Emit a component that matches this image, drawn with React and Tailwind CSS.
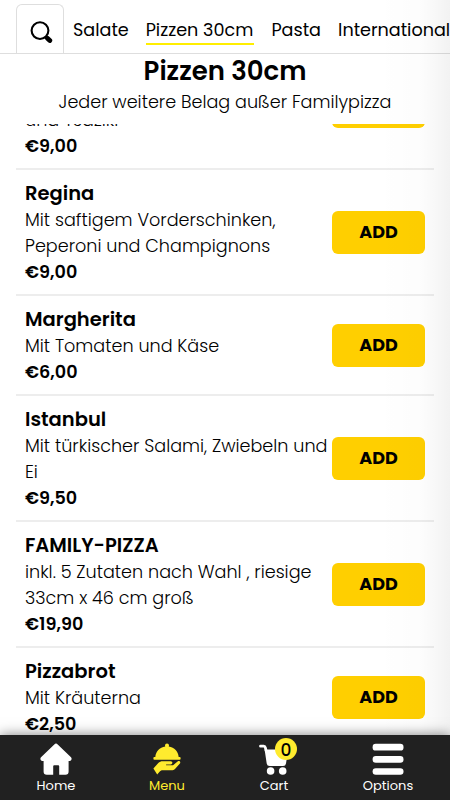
import { useState } from "react";

const CATEGORIES = [
  { name: "Salate", width: "w-[55px]" },
  { name: "Pizzen 30cm", width: "w-[108px]" },
  { name: "Pasta", width: "w-[49px]" },
  { name: "International", width: "w-[116px]" },
];

const PIZZAS = [
  { lines: ["und Tsaziki"], price: "€9,00" },
  {
    name: "Regina",
    lines: ["Mit saftigem Vorderschinken,", "Peperoni und Champignons"],
    price: "€9,00",
  },
  { name: "Margherita", lines: ["Mit Tomaten und Käse"], price: "€6,00" },
  {
    name: "Istanbul",
    lines: ["Mit türkischer Salami, Zwiebeln und", "Ei"],
    price: "€9,50",
  },
  {
    name: "FAMILY-PIZZA",
    lines: ["inkl. 5 Zutaten nach Wahl , riesige", "33cm x 46 cm groß"],
    price: "€19,90",
  },
  { name: "Pizzabrot", lines: ["Mit Kräuterna"], price: "€2,50" },
];

const SearchIcon = () => (
  <svg viewBox="0 0 24 24" className="h-6 w-6" fill="none" stroke="currentColor">
    <circle cx="11" cy="10.600" r="8.400" strokeWidth="2.100" />
    <path d="M16.500 16.500 18 18" strokeWidth="2" />
    <path d="M18.400 18.200 20.800 20.500" strokeWidth="4.800" strokeLinecap="round" />
  </svg>
);

const HomeIcon = () => (
  <svg viewBox="0 0 32 32" className="h-8 w-8" fill="currentColor">
    <path d="M14.3 1.400a2.400 2.400 0 0 1 3.400 0L31 14.300c1.200 1.200.6 3.600-1.400 3.600H28.600V28.500a3.200 3.200 0 0 1-3.200 3.200H19.200V23.300a1 1 0 0 0-1-1H14.200a1 1 0 0 0-1 1V31.700H6.800A3.200 3.200 0 0 1 3.600 28.500V17.900H2.400C.4 17.900-.2 15.500 1 14.300Z" />
  </svg>
);

const MenuIcon = () => (
  <svg viewBox="0 0 28 32" className="h-8 w-7" fill="currentColor">
    <path d="M12 2.600a2 2 0 1 1 4 0c0 .4-.1.700-.3 1C21.500 4.300 25.300 8.700 25.700 14.200H2.300C2.700 8.700 6.500 4.300 12.300 3.600a2 2 0 0 1-.3-1Z" />
    <rect x=".4" y="14" width="27.200" height="2.700" rx="1" />
    <path d="m.4 25.600 4.900-5.700c1.200-1.200 2.700-1.700 4.300-1.700h8.100c2.300 0 2.200 3.100 0 3.200h-4.600v.9h5.700c.9 0 1.600-.3 2.200-.9l3.600-3c1.800-1.200 3.500.5 2.300 2.200l-4.700 5.100c-1 1-2.300 1.500-3.800 1.500h-8.600c-1.200 0-2.200.5-3 1.400L4.200 31.500Z" />
  </svg>
);

const CartIcon = () => (
  <svg viewBox="0 0 32 32" className="h-8 w-8" fill="currentColor">
    <path
      d="M2.500 3.200h3.200c1 0 1.500.6 1.700 1.500l.7 3"
      fill="none"
      stroke="currentColor"
      strokeWidth="2.800"
      strokeLinecap="round"
    />
    <path d="M6.600 6.600h23.600L28 20.500a3 3 0 0 1-3 2.600H11.700a3 3 0 0 1-3-2.500Z" />
    <circle cx="12.600" cy="28" r="3.800" />
    <circle cx="24.700" cy="28" r="3.800" />
  </svg>
);

const OptionsIcon = () => (
  <svg viewBox="0 0 32 32" className="h-8 w-8" fill="currentColor">
    <rect x=".6" y=".8" width="30.900" height="6.800" rx="3.200" />
    <rect x=".6" y="13" width="30.900" height="6.800" rx="3.200" />
    <rect x=".6" y="25.200" width="30.900" height="6.500" rx="3.200" />
  </svg>
);

function PizzaRow({ pizza, onAdd }) {
  return (
    <li
      className={`flex items-center border-b-2 border-[#ededed] px-[9px] pt-[11px] pb-[9px] ${
        pizza.name ? "" : "h-[126px]"
      }`}
    >
      <div
        className={`min-w-0 flex-1 text-[17.6px] leading-[26px] whitespace-nowrap ${
          pizza.name ? "" : "self-end"
        }`}
      >
        {pizza.name && (
          <h3 className="text-[19.5px] leading-[26px] font-semibold">{pizza.name}</h3>
        )}
        {pizza.lines.map((line) => (
          <p key={line} className="font-light">
            {line}
          </p>
        ))}
        <p className="font-semibold">{pizza.price}</p>
      </div>
      <button
        onClick={onAdd}
        className="-mt-0.5 h-[43px] w-[93px] shrink-0 rounded-md bg-[#ffcf00] pt-px text-[17.6px] font-bold"
      >
        ADD
      </button>
    </li>
  );
}

function App() {
  const [active, setActive] = useState("Pizzen 30cm");
  const [cartCount, setCartCount] = useState(0);

  return (
    <div className="relative flex h-[800px] w-[450px] flex-col overflow-hidden bg-white font-['Poppins','Inter',sans-serif] text-black">
      <nav className="flex h-[54px] shrink-0 items-end border-b border-[#dedede] pl-4">
        <button className="-mb-px flex h-[50px] w-12 shrink-0 items-center justify-center rounded-t-md border border-b-0 border-[#dedede] pt-1 pl-0.5">
          <SearchIcon />
        </button>
        <div className="ml-[9px] flex gap-[17.7px] pb-2">
          {CATEGORIES.map(({ name, width }) => (
            <button
              key={name}
              onClick={() => setActive(name)}
              className={`h-[31px] shrink-0 border-b-2 pt-1 text-left text-[17.6px] leading-[25px] whitespace-nowrap ${width} ${
                active === name ? "border-[#ffee00]" : "border-transparent"
              }`}
            >
              {name}
            </button>
          ))}
        </div>
      </nav>

      <header className="h-[70px] shrink-0 text-center whitespace-nowrap">
        <h1 className="text-[26px] leading-[35px] font-semibold">Pizzen 30cm</h1>
        <p className="text-[17.6px] leading-[26px] font-light">
          Jeder weitere Belag außer Familypizza
        </p>
      </header>

      <main className="flex h-[611px] shrink-0 flex-col overflow-hidden px-4">
        <ul className="-mt-20">
          {PIZZAS.map((pizza) => (
            <PizzaRow
              key={pizza.name ?? pizza.lines[0]}
              pizza={pizza}
              onAdd={() => setCartCount((count) => count + 1)}
            />
          ))}
        </ul>
      </main>

      {/* edge shading over the scroll area */}
      <div className="pointer-events-none absolute top-0 right-0 h-[735px] w-[72px] bg-linear-to-r from-black/0 via-black/1 via-60% to-black/5" />

      <footer className="relative flex h-[65px] shrink-0 bg-[#212121] text-[13px] leading-4 text-white shadow-[0_0_12px_rgba(0,0,0,0.5)]">
        <a className="flex w-[112px] flex-col items-center gap-[3px] pt-2">
          <HomeIcon />
          Home
        </a>
        <a className="flex w-[110px] flex-col items-center gap-[3px] pt-2 text-[#ffeb2e]">
          <MenuIcon />
          Menu
        </a>
        <a className="relative flex w-[104px] flex-col items-center gap-[3px] pt-2">
          <CartIcon />
          Cart
          <span className="absolute top-[3px] left-[53px] flex h-[22px] w-[22px] items-center justify-center rounded-full bg-[#ffeb2e] pt-0.5 text-[17px] font-medium text-black">
            {cartCount}
          </span>
        </a>
        <a className="flex w-[124px] flex-col items-center gap-[3px] pt-2">
          <OptionsIcon />
          Options
        </a>
      </footer>
    </div>
  );
}

export default App;
